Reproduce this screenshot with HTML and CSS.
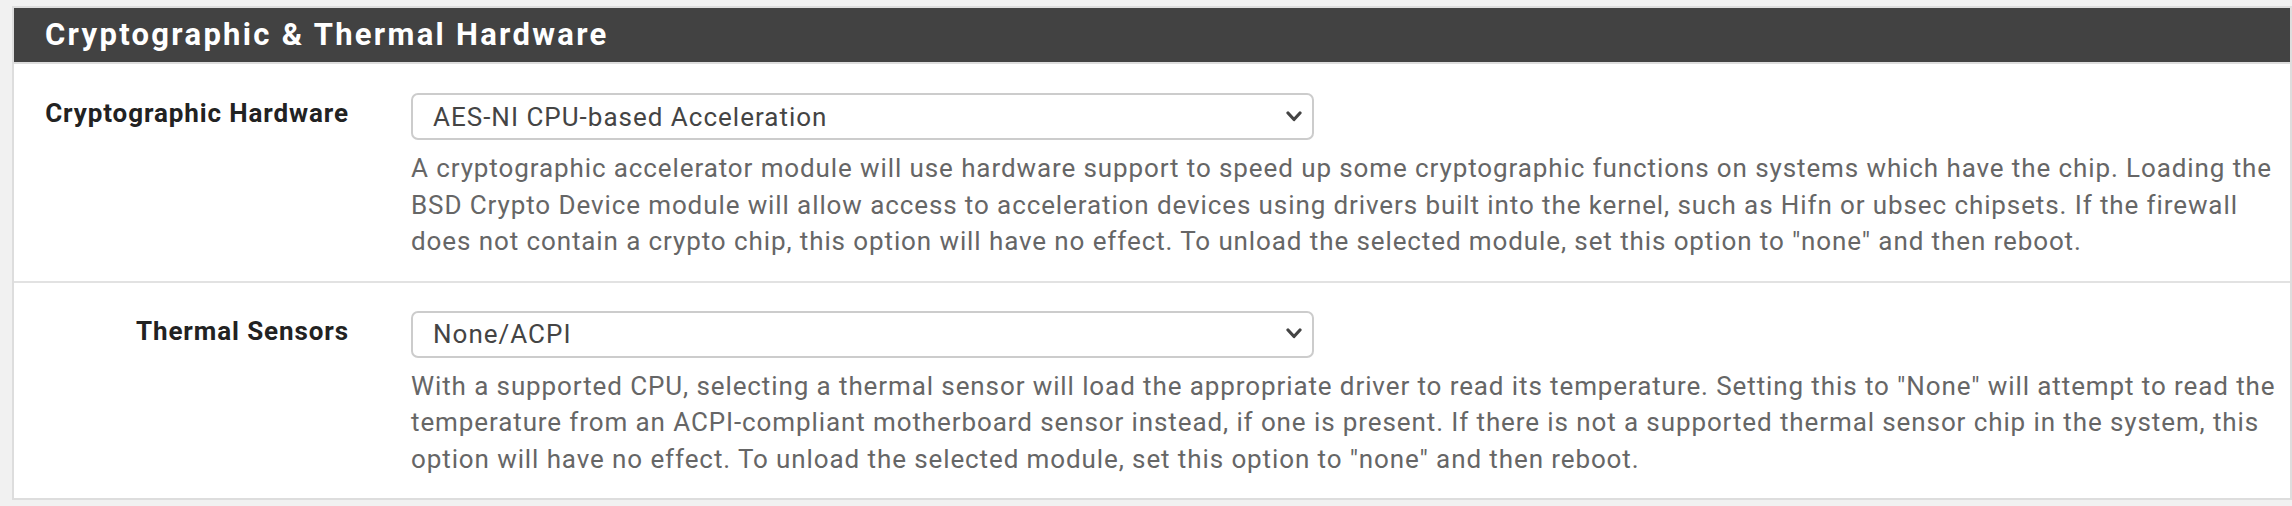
FILE: index.html
```html
<!DOCTYPE html>
<html lang="en">
<head>
<meta charset="utf-8">
<title>Cryptographic &amp; Thermal Hardware</title>
<link rel="stylesheet" href="styles.css">
</head>
<body>
<div class="panel">
  <div class="panel-heading"><h2 class="panel-title">Cryptographic &amp; Thermal Hardware</h2></div>
  <div class="panel-body">
    <div class="form-row">
      <div class="label">Cryptographic Hardware</div>
      <div class="field">
        <div class="select"><span>AES-NI CPU-based Acceleration</span>
          <svg class="chev" viewBox="0 0 16 12" width="16" height="12"><path d="M2 2 L8 8.5 L14 2" fill="none" stroke="#444" stroke-width="3.2" stroke-linecap="round" stroke-linejoin="round"/></svg>
        </div>
        <p class="help">A cryptographic accelerator module will use hardware support to speed up some cryptographic functions on systems which have the chip. Loading the BSD Crypto Device module will allow access to acceleration devices using drivers built into the kernel, such as Hifn or ubsec chipsets. If the firewall does not contain a crypto chip, this option will have no effect. To unload the selected module, set this option to "none" and then reboot.</p>
      </div>
    </div>
    <div class="form-row">
      <div class="label">Thermal Sensors</div>
      <div class="field">
        <div class="select"><span>None/ACPI</span>
          <svg class="chev" viewBox="0 0 16 12" width="16" height="12"><path d="M2 2 L8 8.5 L14 2" fill="none" stroke="#444" stroke-width="3.2" stroke-linecap="round" stroke-linejoin="round"/></svg>
        </div>
        <p class="help">With a supported CPU, selecting a thermal sensor will load the appropriate driver to read its temperature. Setting this to "None" will attempt to read the temperature from an ACPI-compliant motherboard sensor instead, if one is present. If there is not a supported thermal sensor chip in the system, this option will have no effect. To unload the selected module, set this option to "none" and then reboot.</p>
      </div>
    </div>
  </div>
</div>
</body>
</html>
```

FILE: styles.css
```css
html, body {
  margin: 0;
  padding: 0;
  background: #f1f1f1;
  font-family: Roboto, "Liberation Sans", sans-serif;
}

body {
  padding: 6px 0 6px 12px;
}

.panel {
  border: 2px solid #dddddd;
  background: #ffffff;
}

.panel-heading {
  background: #424242;
  display: flex;
  align-items: center;
  padding-left: 31px;
  padding-bottom: 2px;
  box-sizing: border-box;
  border-bottom: 2px solid #dddddd;
  height: 56px;
}

.panel-title {
  margin: 0;
  color: #ffffff;
  font-size: 31px;
  font-weight: 700;
  letter-spacing: 2.3px;
}

.form-row {
  display: grid;
  grid-template-columns: 397px 1fr;
  padding: 29px 0 21px 0;
}

.form-row + .form-row {
  border-top: 2px solid #e2e2e2;
  padding-top: 28px;
}

.label {
  text-align: right;
  padding-right: 62px;
  font-size: 26px;
  letter-spacing: 0.9px;
  font-weight: 700;
  color: #222222;
  line-height: 40px;
}

.field {
  padding-right: 4px;
}

.select {
  width: 903px;
  box-sizing: border-box;
  height: 47px;
  border: 2px solid #cccccc;
  border-radius: 7px;
  display: flex;
  align-items: center;
  justify-content: space-between;
  padding: 0 10px 0 20px;
  font-size: 26px;
  letter-spacing: 1px;
  color: #444444;
}

.help {
  margin: 10px 0 0 0;
  font-size: 26px;
  letter-spacing: 0.9px;
  line-height: 36.5px;
  color: #666666;
}
```
